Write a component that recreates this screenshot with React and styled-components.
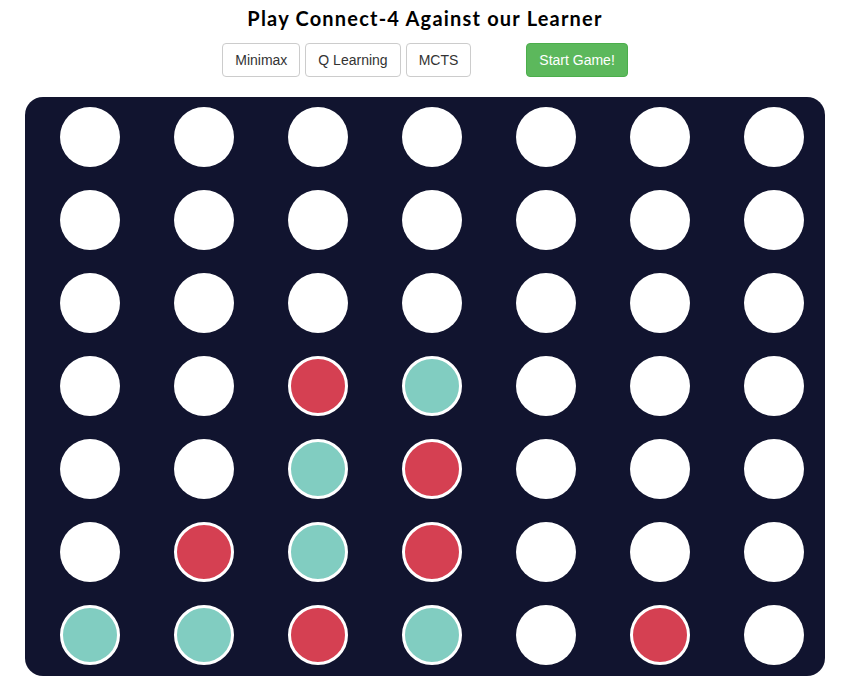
import React from 'react';
import styled, { createGlobalStyle } from 'styled-components';

const GlobalStyle = createGlobalStyle`
  html, body {
    margin: 0;
    padding: 0;
    background: #fff;
  }
`;

const Page = styled.div`
  width: 800px;
  margin-left: 25px;
  display: flex;
  flex-direction: column;
  align-items: center;
`;

const Title = styled.h1`
  margin: 0;
  padding-top: 6px;
  height: 37px;
  box-sizing: border-box;
  font-family: Lato, "Noto Sans", sans-serif;
  font-weight: 700;
  font-size: 20px;
  line-height: 24px;
  letter-spacing: 1.2px;
  color: #000;
`;

const Toolbar = styled.div`
  display: flex;
  align-items: center;
  gap: 5px;
  margin-top: 6px;
`;

const Button = styled.button`
  box-sizing: border-box;
  height: 34px;
  padding: 6px 12px;
  font-family: "Liberation Sans", Arial, sans-serif;
  font-size: 14px;
  line-height: 20px;
  border-radius: 4px;
  border: 1px solid ${p => (p.$primary ? '#4cae4c' : '#ccc')};
  background: ${p => (p.$primary ? '#5cb85c' : '#fff')};
  color: ${p => (p.$primary ? '#fff' : '#333')};
  margin-left: ${p => (p.$primary ? '50px' : '0')};
  cursor: pointer;
`;

const Board = styled.div`
  box-sizing: border-box;
  width: 800px;
  height: 579px;
  margin-top: 20px;
  padding: 10px 21px 11px 35px;
  background: #11142f;
  border-radius: 18px;
  display: grid;
  grid-template-columns: repeat(7, 60px);
  grid-auto-rows: 60px;
  column-gap: 54px;
  row-gap: 23px;
`;

const colours = {
  0: '#ffffff',
  1: '#d54052',
  2: '#81cdc1',
};

const Disc = styled.div`
  box-sizing: border-box;
  width: 60px;
  height: 60px;
  border-radius: 50%;
  background: ${p => colours[p.$player]};
  border: ${p => (p.$player ? '3px solid #fff' : 'none')};
`;

// 0 empty, 1 red, 2 teal
const grid = [
  [0, 0, 0, 0, 0, 0, 0],
  [0, 0, 0, 0, 0, 0, 0],
  [0, 0, 0, 0, 0, 0, 0],
  [0, 0, 1, 2, 0, 0, 0],
  [0, 0, 2, 1, 0, 0, 0],
  [0, 1, 2, 1, 0, 0, 0],
  [2, 2, 1, 2, 0, 1, 0],
];

const App = () => (
  <>
    <GlobalStyle />
    <Page>
      <Title>Play Connect-4 Against our Learner</Title>
      <Toolbar>
        <Button>Minimax</Button>
        <Button>Q Learning</Button>
        <Button>MCTS</Button>
        <Button $primary>Start Game!</Button>
      </Toolbar>
      <Board>
        {grid.map((row, r) =>
          row.map((cell, c) => <Disc key={`${r}-${c}`} $player={cell} />)
        )}
      </Board>
    </Page>
  </>
);

export default App;
